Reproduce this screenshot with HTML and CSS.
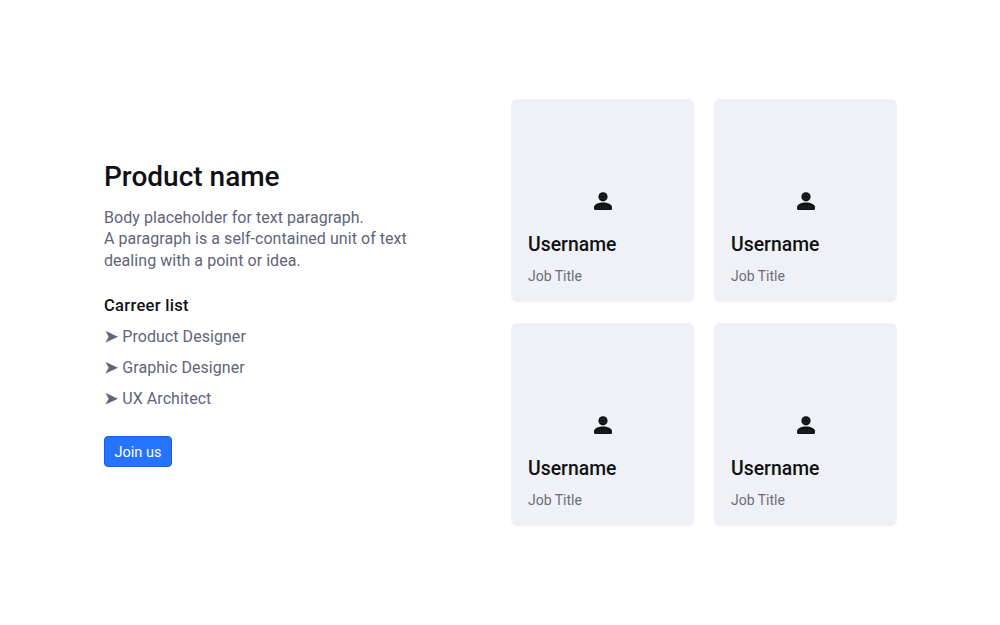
FILE: index.html
```html
<!DOCTYPE html>
<html lang="en">
<head>
<meta charset="utf-8">
<title>Product name</title>
<link rel="stylesheet" href="styles.css">
</head>
<body>
<svg class="sprite" aria-hidden="true">
  <symbol id="user" viewBox="0 0 18 18">
    <circle cx="9" cy="4.800" r="4.600"/>
    <path d="M0 16.500v-1.300C0 12 4.600 10.400 9 10.400s9 1.600 9 4.800v1.300a1.500 1.500 0 0 1-1.500 1.500h-15A1.500 1.500 0 0 1 0 16.500z"/>
    <circle class="icon-detail" cx="9" cy="4.800" r="2.300"/>
    <path class="icon-detail" d="M4 14v3M6.500 13v4M9 13v4M11.500 13v4M14 14v3"/>
  </symbol>
</svg>
<main class="page">
  <section class="intro">
    <h1 class="title">Product name</h1>
    <p class="body">Body placeholder for text paragraph.<br>A paragraph is a self-contained unit of text dealing with a point or idea.</p>
    <h2 class="list-title">Carreer list</h2>
    <ul class="list">
      <li class="list-item">Product Designer</li>
      <li class="list-item">Graphic Designer</li>
      <li class="list-item">UX Architect</li>
    </ul>
    <button class="button" type="button">Join us</button>
  </section>
  <section class="grid">
    <article class="card">
      <svg class="icon" aria-hidden="true"><use href="#user"/></svg>
      <h3 class="name">Username</h3>
      <p class="job">Job Title</p>
    </article>
    <article class="card">
      <svg class="icon" aria-hidden="true"><use href="#user"/></svg>
      <h3 class="name">Username</h3>
      <p class="job">Job Title</p>
    </article>
    <article class="card">
      <svg class="icon" aria-hidden="true"><use href="#user"/></svg>
      <h3 class="name">Username</h3>
      <p class="job">Job Title</p>
    </article>
    <article class="card">
      <svg class="icon" aria-hidden="true"><use href="#user"/></svg>
      <h3 class="name">Username</h3>
      <p class="job">Job Title</p>
    </article>
  </section>
</main>
</body>
</html>
```
FILE: styles.css
```css
* { box-sizing: border-box; }
html, body { margin: 0; padding: 0; background: #fff; }
body { font-family: Roboto, "Liberation Sans", sans-serif; color: #0f1115; }
.sprite { display: none; }
.page {
  width: 1000px;
  height: 625px;
  padding: 0 103px 0 104px;
  display: flex;
  align-items: center;
  justify-content: space-between;
}
.intro { width: 320px; display: flex; flex-direction: column; align-items: flex-start; }
.title { margin: 1px 0 11.500px; font-size: 28px; line-height: 36px; font-weight: 500; }
.body { margin: 0 0 23.500px; font-size: 16px; line-height: 21.500px; letter-spacing: 0.05px; color: #62647a; }
.list-title { margin: 0 0 8px; font-size: 16.500px; line-height: 22px; font-weight: 500; letter-spacing: 0.3px; }
.list { margin: 0 0 25.500px; padding: 0; list-style: none; display: flex; flex-direction: column; gap: 7px; }
.list-item { height: 24px; font-size: 16px; line-height: 24px; letter-spacing: 0.05px; color: #62647a; }
.list-item::before {
  content: "\27A4";
  font-family: "DejaVu Sans", sans-serif;
  font-size: 17px;
  line-height: 0;
  margin-right: 4px;
  -webkit-text-stroke: 0.3px #62647a;
}
.button {
  width: 68px;
  height: 31px;
  padding: 2px 0 0;
  border: 1px solid #1a5fd8;
  border-radius: 4px;
  background: #2673ff;
  color: #fff;
  font: 400 14.500px/20px Roboto, sans-serif;
}
.grid { display: grid; grid-template-columns: 183px 183px; grid-auto-rows: 203px; gap: 21px 20px; }
.card {
  background: #f0f1f6;
  border-radius: 6px;
  padding: 93px 17px 0;
  display: flex;
  flex-direction: column;
}
.icon { display: block; width: 18px; height: 18px; margin: 0 0 0 66px; fill: #0f1115; }
.icon-detail { fill: none; stroke: #3c3e46; stroke-width: 0.5; }
.name { margin: 22px 0 0; font-size: 19.400px; line-height: 26px; font-weight: 500; }
.job { margin: 8px 0 0; font-size: 14px; line-height: 20px; color: #6a6c7a; }
```
